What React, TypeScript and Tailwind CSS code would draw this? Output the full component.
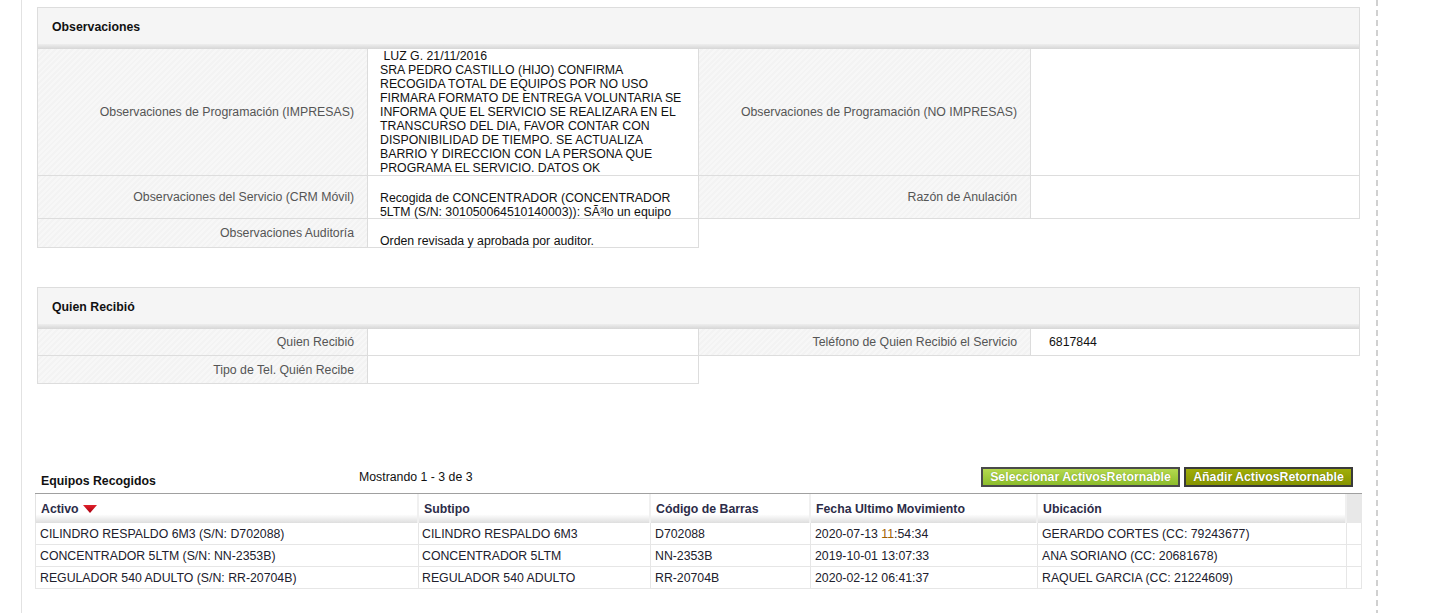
import React from "react";

const stripe =
  "bg-[repeating-linear-gradient(-45deg,#f3f3f3_0px,#f3f3f3_2px,#f7f7f7_2px,#f7f7f7_4px)]";

const Label = ({ text, w, h }: { text: string; w: string; h: string }) => (
  <div
    className={`${w} ${h} ${stripe} border-r border-[#dcdcdc] flex items-center justify-end pr-[13px] text-[#555] shrink-0`}
  >
    {text}
  </div>
);

const PanelHeader = ({ title }: { title: string }) => (
  <>
    <div className="h-[37px] pt-[2px] border border-b-0 border-[#dddddd] bg-[#f5f5f5] flex items-center pl-[14px] font-bold text-[#111]">
      {title}
    </div>
    <div className="h-[5px] border-x border-[#dddddd] bg-linear-to-b from-[#eeeeee] to-[#d6d6d6]" />
  </>
);

const programacion = [
  " LUZ G. 21/11/2016",
  "SRA PEDRO CASTILLO (HIJO) CONFIRMA",
  "RECOGIDA TOTAL DE EQUIPOS POR NO USO",
  "FIRMARA FORMATO DE ENTREGA VOLUNTARIA SE",
  "INFORMA QUE EL SERVICIO SE REALIZARA EN EL",
  "TRANSCURSO DEL DIA, FAVOR CONTAR CON",
  "DISPONIBILIDAD DE TIEMPO. SE ACTUALIZA",
  "BARRIO Y DIRECCION CON LA PERSONA QUE",
  "PROGRAMA EL SERVICIO. DATOS OK",
];

interface Equipo {
  activo: string;
  subtipo: string;
  codigo: string;
  fecha: string;
  ubicacion: string;
}

const equipos: Equipo[] = [
  {
    activo: "CILINDRO RESPALDO 6M3 (S/N: D702088)",
    subtipo: "CILINDRO RESPALDO 6M3",
    codigo: "D702088",
    fecha: "2020-07-13 11:54:34",
    ubicacion: "GERARDO CORTES (CC: 79243677)",
  },
  {
    activo: "CONCENTRADOR 5LTM (S/N: NN-2353B)",
    subtipo: "CONCENTRADOR 5LTM",
    codigo: "NN-2353B",
    fecha: "2019-10-01 13:07:33",
    ubicacion: "ANA SORIANO (CC: 20681678)",
  },
  {
    activo: "REGULADOR 540 ADULTO (S/N: RR-20704B)",
    subtipo: "REGULADOR 540 ADULTO",
    codigo: "RR-20704B",
    fecha: "2020-02-12 06:41:37",
    ubicacion: "RAQUEL GARCIA (CC: 21224609)",
  },
];

const cols = ["w-[383px]", "w-[232px]", "w-[160px]", "w-[227px]", "w-[309px]"];

const App = () => {
  return (
    <div className="w-[1442px] h-[613px] overflow-hidden bg-white flex font-['Liberation_Sans',Arial,sans-serif] text-[12.3px] leading-[14px]">
      <div className="w-[21px] shrink-0" />
      {/* main content column */}
      <div className="w-[1355px] shrink-0 border-l border-[#e2e2e2] h-full">
        {/* Observaciones */}
        <div className="ml-[15px] w-[1323px] mt-[7px]">
          <PanelHeader title="Observaciones" />
          <div className="flex h-[127px] border-x border-b border-[#dddddd]">
            <Label text="Observaciones de Programación (IMPRESAS)" w="w-[330px]" h="h-full" />
            <div className="w-[331px] shrink-0 border-r border-[#dcdcdc] pl-[12px] text-[#111] whitespace-pre">
              {programacion.join("\n")}
            </div>
            <Label text="Observaciones de Programación (NO IMPRESAS)" w="w-[332px]" h="h-full" />
            <div className="flex-1" />
          </div>
          <div className="flex h-[43px] border-x border-b border-[#dddddd]">
            <Label text="Observaciones del Servicio (CRM Móvil)" w="w-[330px]" h="h-full" />
            <div className="w-[331px] shrink-0 border-r border-[#dcdcdc] pl-[12px] pt-[15px] text-[#111] whitespace-pre">
              {"Recogida de CONCENTRADOR (CONCENTRADOR\n5LTM (S/N: 301050064510140003)): SÃ³lo un equipo"}
            </div>
            <Label text="Razón de Anulación" w="w-[332px]" h="h-full" />
            <div className="flex-1" />
          </div>
          <div className="flex h-[29px] w-[662px] border-x border-b border-[#dddddd]">
            <Label text="Observaciones Auditoría" w="w-[330px]" h="h-full" />
            <div className="flex-1 pl-[12px] pt-[15px] text-[#111]">
              Orden revisada y aprobada por auditor.
            </div>
          </div>
        </div>

        {/* Quien Recibió */}
        <div className="ml-[15px] w-[1323px] mt-[39px]">
          <PanelHeader title="Quien Recibió" />
          <div className="flex h-[27px] border-x border-b border-[#dddddd]">
            <Label text="Quien Recibió" w="w-[330px]" h="h-full" />
            <div className="w-[331px] shrink-0 border-r border-[#dcdcdc]" />
            <Label text="Teléfono de Quien Recibió el Servicio" w="w-[332px]" h="h-full" />
            <div className="flex-1 flex items-center pl-[18px] text-[#111]">6817844</div>
          </div>
          <div className="flex h-[28px] w-[662px] border-x border-b border-[#dddddd]">
            <Label text="Tipo de Tel. Quién Recibe" w="w-[330px]" h="h-full" />
            <div className="flex-1" />
          </div>
        </div>

        {/* Equipos Recogidos */}
        <div className="ml-[13px] w-[1327px] mt-[82px]">
          <div className="flex items-center h-[22px] mb-[5px]">
            <div className="w-[324px] pl-[6px] self-end font-bold text-[#111]">Equipos Recogidos</div>
            <div className="text-[#111]">Mostrando 1 - 3 de 3</div>
            <div className="flex-1" />
            <button className="w-[199px] h-[20px] border-2 border-[#4a4a4a] bg-linear-to-b from-[#b4d94e] to-[#8cbd2a] text-white font-bold text-[12.3px] leading-[16px] [text-shadow:0_0_1px_#6a8a10]">
              Seleccionar ActivosRetornable
            </button>
            <button className="ml-[4px] mr-[9px] w-[169px] h-[20px] border-2 border-[#3a3a3a] bg-linear-to-b from-[#a0ae0a] to-[#869400] text-white font-bold text-[12.3px] leading-[16px] [text-shadow:0_0_1px_#55600a]">
              Añadir ActivosRetornable
            </button>
          </div>

          <div className="border-t border-[#a0a0a0]">
            {/* header */}
            <div className="flex h-[29px] border-l border-[#e3e3e3] bg-linear-to-b from-white from-70% to-[#dedede] font-bold text-[#2c2c48]">
              {["Activo", "Subtipo", "Código de Barras", "Fecha Ultimo Movimiento", "Ubicación"].map((h, i) => (
                <div
                  key={h}
                  className={`${cols[i]} shrink-0 border-r-2 border-[#f0f0f0] flex items-center pl-[5px]`}
                >
                  {h}
                  {i === 0 && (
                    <svg width="14" height="8" viewBox="0 0 14 8" className="ml-[4px]">
                      <defs>
                        <linearGradient id="tri" x1="0" y1="0" x2="0" y2="1">
                          <stop offset="0" stopColor="#e0202a" />
                          <stop offset="1" stopColor="#a80010" />
                        </linearGradient>
                      </defs>
                      <polygon points="0,0 14,0 7,8" fill="url(#tri)" />
                    </svg>
                  )}
                </div>
              ))}
              <div className="flex-1 bg-[#e8e8e8]" />
            </div>
            {/* rows */}
            {equipos.map((e) => (
              <div key={e.codigo} className="flex h-[22px] border-l border-b border-[#e6e6e6] text-[#20202c]">
                <div className={`${cols[0]} shrink-0 border-r border-[#e6e6e6] flex items-center pl-[4px]`}>{e.activo}</div>
                <div className={`${cols[1]} shrink-0 border-r border-[#e6e6e6] flex items-center pl-[3px]`}>{e.subtipo}</div>
                <div className={`${cols[2]} shrink-0 border-r border-[#e6e6e6] flex items-center pl-[4px]`}>{e.codigo}</div>
                <div className={`${cols[3]} shrink-0 border-r border-[#e6e6e6] flex items-center pl-[4px]`}>
                  {e.fecha.startsWith("2020-07-13") ? (
                    <span>
                      2020-07-13 <span className="text-[#a06000]">11</span>:54:34
                    </span>
                  ) : (
                    e.fecha
                  )}
                </div>
                <div className={`${cols[4]} shrink-0 border-r border-[#e6e6e6] flex items-center pl-[4px]`}>{e.ubicacion}</div>
                <div className="flex-1 border-r border-[#e6e6e6]" />
              </div>
            ))}
          </div>
        </div>
      </div>
      {/* dashed right edge */}
      <div className="w-[2px] h-full shrink-0 bg-[repeating-linear-gradient(to_bottom,#d0d0d0_0px,#d0d0d0_6px,transparent_6px,transparent_10px)]" />
    </div>
  );
};

export default App;
